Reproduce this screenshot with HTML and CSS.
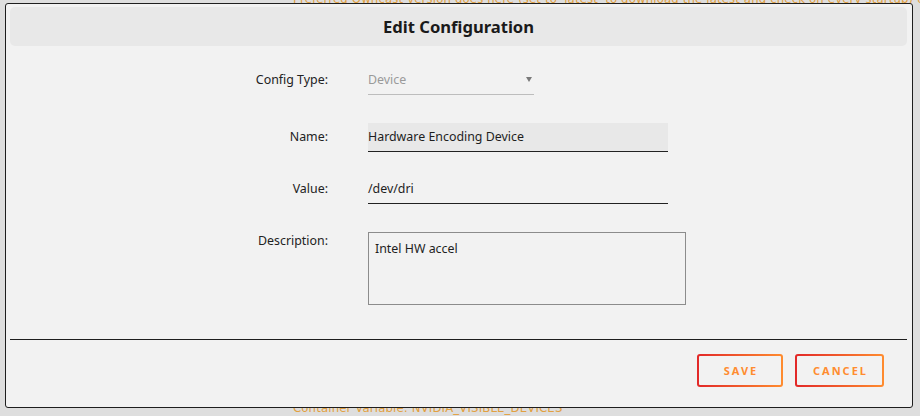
FILE: index.html
```html
<!DOCTYPE html>
<html lang="en">
<head>
<meta charset="utf-8">
<title>Edit Configuration</title>
<link rel="stylesheet" href="styles.css">
</head>
<body>
<div class="backdrop">
  <div class="bg-line bg-top">Preferred Owncast version goes here (set to 'latest' to download the latest and check on every startup) or a specific version number</div>
  <div class="bg-line bg-bottom">Container Variable: NVIDIA_VISIBLE_DEVICES</div>
</div>

<div class="modal">
  <div class="header">Edit Configuration</div>

  <div class="form">
    <div class="row">
      <label class="label">Config Type:</label>
      <div class="select">
        <span>Device</span>
        <svg class="caret" width="6" height="5" viewBox="0 0 6 5"><path d="M0 0H6L3 5Z" fill="#7a7a7a"/></svg>
      </div>
    </div>
    <div class="row row-name">
      <label class="label">Name:</label>
      <div class="field field-filled">Hardware Encoding Device</div>
    </div>
    <div class="row row-value">
      <label class="label">Value:</label>
      <div class="field">/dev/dri</div>
    </div>
    <div class="row row-desc">
      <label class="label label-top">Description:</label>
      <div class="textarea">Intel HW accel</div>
    </div>
  </div>

  <div class="divider"></div>

  <div class="footer">
    <button class="btn">SAVE</button>
    <button class="btn">CANCEL</button>
  </div>
</div>
</body>
</html>
```

FILE: styles.css
```css
html, body {
  margin: 0;
  padding: 0;
}

body {
  width: 920px;
  height: 416px;
  overflow: hidden;
  position: relative;
  background: #dedede;
  font-family: "Noto Sans", "Open Sans", sans-serif;
  color: #1e1e1e;
}

.backdrop {
  height: 416px;
  box-sizing: border-box;
  padding-left: 293px;
  display: flex;
  flex-direction: column;
  justify-content: space-between;
  overflow: hidden;
}

.bg-line {
  font-family: "DejaVu Sans Condensed", "DejaVu Sans", sans-serif;
  font-size: 13px;
  line-height: 16px;
  letter-spacing: 0.15px;
  color: #e2a040;
  white-space: nowrap;
  overflow: hidden;
}

.bg-top {
  margin-top: -9px;
}

.bg-bottom {
  margin-bottom: 0;
}

.modal {
  position: absolute;
  left: 5px;
  top: 3px;
  width: 908px;
  height: 405px;
  box-sizing: border-box;
  border: 1px solid #1e1e1e;
  border-radius: 3px;
  background: #f2f2f2;
  padding: 3px 5px 0 4px;
  display: flex;
  flex-direction: column;
}

.header {
  height: 39px;
  flex: none;
  background: #e8e8e8;
  border-radius: 5px;
  display: flex;
  align-items: center;
  justify-content: center;
  font-weight: 700;
  font-size: 16.6px;
  color: #1a1a1a;
}

.form {
  padding-top: 20px;
  display: flex;
  flex-direction: column;
  font-size: 12.4px;
}

.row {
  display: flex;
  gap: 40px;
  align-items: flex-start;
}

.row-name { margin-top: 28px; }
.row-value { margin-top: 23px; }
.row-desc { margin-top: 28px; }

.label {
  width: 318px;
  flex: none;
  text-align: right;
  line-height: 27px;
  color: #222;
}

.label-top {
  line-height: 18px;
}

.select {
  width: 166px;
  height: 28px;
  border-bottom: 1px solid #bdbdbd;
  display: flex;
  align-items: center;
  justify-content: space-between;
  color: #9a9a9a;
}

.select span {
  margin-top: -2px;
}

.caret {
  margin-right: 2px;
  margin-top: -2px;
}

.field {
  width: 300px;
  height: 28px;
  line-height: 28px;
  border-bottom: 1px solid #222;
  color: #1e1e1e;
}

.field-filled {
  background: #e8e8e8;
}

.textarea {
  width: 318px;
  height: 73px;
  box-sizing: border-box;
  border: 1px solid #8c8c8c;
  padding: 8px 6px;
  line-height: 16px;
  color: #1e1e1e;
}

.divider {
  margin-top: 34px;
  height: 1px;
  background: #1e1e1e;
  flex: none;
}

.footer {
  display: flex;
  justify-content: flex-end;
  gap: 12px;
  padding: 14px 23px 0 0;
}

.btn {
  min-width: 86px;
  height: 33px;
  box-sizing: border-box;
  padding: 0 14px 0 16px;
  border: 2px solid transparent;
  border-radius: 3px;
  background:
    linear-gradient(#f2f2f2, #f2f2f2) padding-box,
    linear-gradient(90deg, #e22828, #ff8c2f) border-box;
  font-family: "Noto Sans", sans-serif;
  font-size: 11px;
  font-weight: 700;
  letter-spacing: 2px;
  color: #ff8c2f;
  cursor: pointer;
}
```
